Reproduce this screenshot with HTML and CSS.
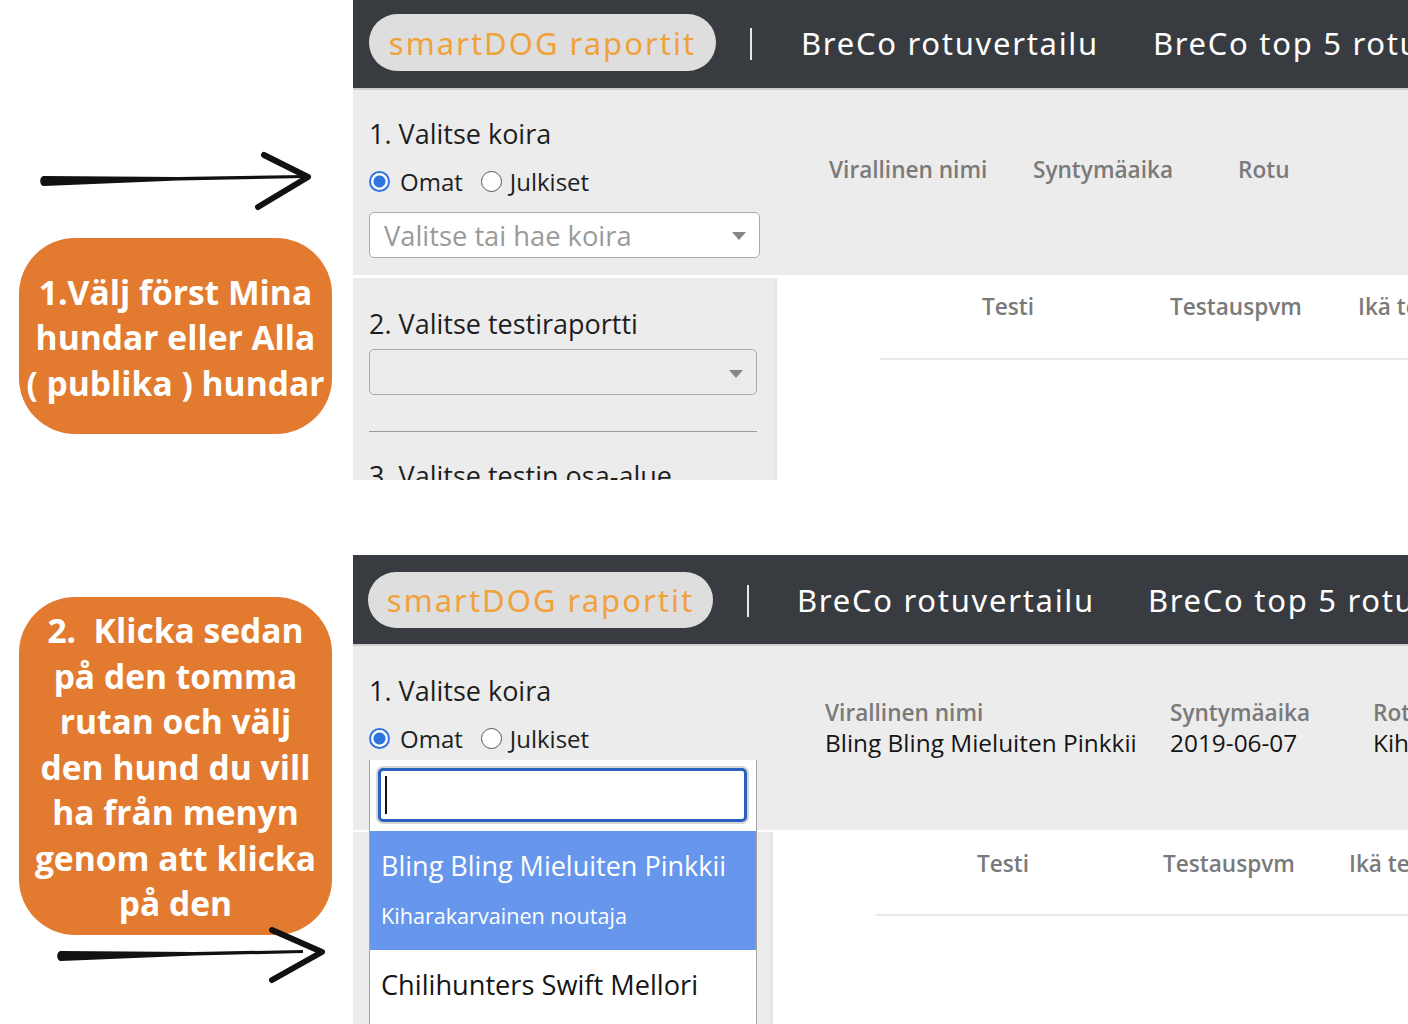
FILE: index.html
```html
<!DOCTYPE html>
<html lang="fi">
<head>
    <meta charset="UTF-8">
    <title>smartDOG raportit - ohje</title>
    <link rel="stylesheet" href="styles.css">
</head>
<body>
<div class="page">
    <aside class="notes">
        <svg class="arrow arrow-one" width="290" height="64" viewBox="0 0 290 64">
            <path d="M6 28 C1 28 1 38 6 38 L140 32.5 L266 30 L266 27 L140 29 Z"/>
            <polyline points="226,7 270,29 220,59"/>
        </svg>
        <div class="callout callout-one">1.Välj först Mina<br>hundar eller Alla<br>( publika ) hundar</div>
        <div class="callout callout-two">2.&nbsp; Klicka sedan<br>på den tomma<br>rutan och välj<br>den hund du vill<br>ha från menyn<br>genom att klicka<br>på den</div>
        <svg class="arrow arrow-two" width="275" height="62" viewBox="0 0 275 62">
            <path d="M6 26 C1 26 1 36 6 36 L140 30.5 L248 28 L248 25 L140 27 Z"/>
            <polyline points="217,5 267,27 217,55"/>
        </svg>
    </aside>

    <main class="shots">
        <!-- koiraa ei ole vielä valittu -->
        <section class="shot shot-first">
            <nav class="nav">
                <div class="brand">smartDOG raportit</div>
                <span class="divider"></span>
                <a class="nav-link">BreCo rotuvertailu</a>
                <a class="nav-link">BreCo top 5 rotuvertailu</a>
            </nav>
            <div class="pick">
                <div class="pick-form">
                    <h2 class="step">1. Valitse koira</h2>
                    <div class="radios">
                        <span class="radio on"></span><span class="radio-label">Omat</span>
                        <span class="radio"></span><span class="radio-label">Julkiset</span>
                    </div>
                    <div class="select">
                        <span class="placeholder">Valitse tai hae koira</span>
                        <span class="caret-down"></span>
                    </div>
                </div>
                <div class="dog-info">
                    <div class="info-col"><div class="info-label">Virallinen nimi</div></div>
                    <div class="info-col"><div class="info-label">Syntymäaika</div></div>
                    <div class="info-col"><div class="info-label">Rotu</div></div>
                </div>
            </div>
            <div class="lower">
                <div class="side">
                    <h2 class="step">2. Valitse testiraportti</h2>
                    <div class="select select-empty"><span class="caret-down"></span></div>
                    <hr class="side-rule">
                    <h2 class="step step-cut">3. Valitse testin osa-alue</h2>
                </div>
                <div class="results">
                    <div class="results-head">
                        <span class="col col-blank"></span>
                        <span class="col">Testi</span>
                        <span class="col">Testauspvm</span>
                        <span class="col">Ikä testissä</span>
                    </div>
                </div>
            </div>
        </section>

        <!-- valintalista auki -->
        <section class="shot shot-second">
            <nav class="nav">
                <div class="brand">smartDOG raportit</div>
                <span class="divider"></span>
                <a class="nav-link">BreCo rotuvertailu</a>
                <a class="nav-link">BreCo top 5 rotuvertailu</a>
            </nav>
            <div class="pick">
                <div class="pick-form">
                    <h2 class="step">1. Valitse koira</h2>
                    <div class="radios">
                        <span class="radio on"></span><span class="radio-label">Omat</span>
                        <span class="radio"></span><span class="radio-label">Julkiset</span>
                    </div>
                    <div class="dropdown">
                        <div class="search"><span class="text-caret"></span></div>
                        <ul class="options">
                            <li class="option active">
                                <div class="option-name">Bling Bling Mieluiten Pinkkii</div>
                                <div class="option-breed">Kiharakarvainen noutaja</div>
                            </li>
                            <li class="option">
                                <div class="option-name">Chilihunters Swift Mellori</div>
                            </li>
                        </ul>
                    </div>
                </div>
                <div class="dog-info">
                    <div class="info-col">
                        <div class="info-label">Virallinen nimi</div>
                        <div class="info-value">Bling Bling Mieluiten Pinkkii</div>
                    </div>
                    <div class="info-col">
                        <div class="info-label">Syntymäaika</div>
                        <div class="info-value">2019-06-07</div>
                    </div>
                    <div class="info-col">
                        <div class="info-label">Rotu</div>
                        <div class="info-value">Kiharakarvainen noutaja</div>
                    </div>
                </div>
            </div>
            <div class="lower">
                <div class="side"></div>
                <div class="results">
                    <div class="results-head">
                        <span class="col col-blank"></span>
                        <span class="col">Testi</span>
                        <span class="col">Testauspvm</span>
                        <span class="col">Ikä testissä</span>
                    </div>
                </div>
            </div>
        </section>
    </main>
</div>
</body>
</html>
```

FILE: styles.css
```css
*{
    margin: 0;
    padding: 0;
    list-style: none;
    box-sizing: border-box;
}
body{
    background: #fff;
    font-family: "Open Sans", "Noto Sans", sans-serif;
    width: 1408px;
    height: 1024px;
    overflow: hidden;
}
.page{
    display: grid;
    grid-template-columns: 353px 1fr;
    height: 1024px;
}

/* ohjeet vasemmalla */
.notes{
    display: flex;
    flex-direction: column;
    align-items: flex-start;
}
.arrow path{
    fill: #111;
}
.arrow polyline{
    fill: none;
    stroke: #111;
    stroke-width: 6;
    stroke-linecap: round;
    stroke-linejoin: round;
}
.arrow-one{
    margin: 148px 0 0 38px;
}
.arrow-two{
    margin: -10px 0 0 55px;
    position: relative;
}
.callout{
    width: 313px;
    margin-left: 19px;
    background: #e27b2f;
    border-radius: 56px;
    color: #fff;
    font-weight: 700;
    font-size: 33.6px;
    line-height: 45.5px;
    text-align: center;
    display: flex;
    align-items: center;
    justify-content: center;
    white-space: nowrap;
}
.callout-one{
    margin-top: 26px;
    height: 196px;
    padding-top: 4px;
}
.callout-two{
    margin-top: 163px;
    height: 338px;
    padding-top: 3px;
}

/* kuvakaappaukset */
.shots{
    display: flex;
    flex-direction: column;
    gap: 75px;
}
.shot{
    overflow: hidden;
    display: flex;
    flex-direction: column;
}
.shot-first{
    height: 480px;
}
.shot-second{
    height: 469px;
}

.nav{
    height: 90px;
    flex: none;
    background: #383b40;
    border-bottom: 2px solid #cdcdcd;
    display: flex;
    align-items: flex-start;
    padding-left: 16px;
    white-space: nowrap;
    font-family: "Noto Sans", sans-serif;
    font-size: 31px;
    letter-spacing: 2px;
}
.brand{
    margin-top: 14px;
    width: 347px;
    height: 57px;
    border-radius: 29px;
    background: #dedede;
    color: #efa23a;
    display: flex;
    align-items: center;
    justify-content: center;
    flex: none;
}
.divider{
    width: 2px;
    height: 32px;
    margin: 28px 49px 0 34px;
    background: #e6e6e6;
    flex: none;
}
.nav-link{
    color: #fff;
    line-height: 86px;
    margin-right: 54px;
    letter-spacing: 1.7px;
}
.shot-second .nav{
    height: 91px;
    padding-left: 15px;
}
.shot-second .brand{
    margin-top: 17px;
    width: 345px;
    height: 56px;
}
.shot-second .divider{
    margin: 30px 48px 0 34px;
}
.shot-second .nav-link{
    line-height: 90px;
    margin-right: 53px;
}

.step{
    font-weight: 400;
    font-size: 27px;
    line-height: 36px;
    color: #1e1e1e;
}
.pick{
    display: flex;
    background: #ececec;
    height: 185px;
    flex: none;
}
.shot-second .pick{
    height: 184px;
}
.pick-form{
    width: 424px;
    padding: 26px 0 0 16px;
    flex: none;
    position: relative;
}
.shot-second .pick-form{
    width: 420px;
    padding-top: 27px;
}
.radios{
    display: flex;
    align-items: center;
    height: 36px;
    margin-top: 11px;
    font-size: 24px;
    color: #1e1e1e;
}
.radio{
    width: 21px;
    height: 21px;
    border-radius: 50%;
    border: 1.5px solid #555;
    background: #fff;
    flex: none;
}
.radio.on{
    border: 2px solid #2f74e0;
    background: radial-gradient(circle, #2f74e0 0 5.5px, #fff 6.5px);
}
.radio-label{
    margin: 0 18px 0 10px;
}
.radio-label:last-child{
    margin-left: 8px;
}

.select{
    margin-top: 13px;
    width: 391px;
    height: 46px;
    border: 1px solid #aaa;
    border-radius: 5px;
    background: #fff;
    display: flex;
    align-items: center;
    padding-left: 14px;
    position: relative;
}
.placeholder{
    font-size: 27.3px;
    color: #9a9a9a;
}
.caret-down{
    position: absolute;
    right: 13px;
    top: 19px;
    border-left: 7px solid transparent;
    border-right: 7px solid transparent;
    border-top: 8px solid #858585;
}
.select-empty{
    background: #ececec;
    width: 388px;
    margin-top: 7px;
}
.select-empty .caret-down{
    top: 20px;
}

.dog-info{
    display: grid;
    grid-template-columns: 204px 205px auto;
    padding: 65px 0 0 52px;
    white-space: nowrap;
}
.shot-second .dog-info{
    grid-template-columns: 345px 203px auto;
    padding-top: 52px;
}
.info-label{
    font-size: 22.6px;
    font-weight: 600;
    color: #7a7a7a;
    line-height: 30px;
}
.info-value{
    font-size: 24.4px;
    color: #151515;
    line-height: 30px;
}

.lower{
    display: flex;
    flex: 1;
    margin-top: 3px;
}
.shot-second .lower{
    margin-top: 2px;
}
.side{
    width: 424px;
    flex: none;
    background: #ececec;
    padding: 28px 0 0 16px;
    box-shadow: inset -3px 0 3px rgba(0, 0, 0, 0.03);
}
.shot-second .side{
    width: 420px;
}
.side-rule{
    border: none;
    border-top: 1px solid #9a9a9a;
    width: 388px;
    margin: 36px 0 26px;
}
.results{
    flex: 1;
    overflow: hidden;
    padding: 0 0 0 103px;
}
.results-head{
    display: flex;
    height: 82px;
    border-bottom: 2px solid #e9e9e9;
    padding-top: 14px;
    white-space: nowrap;
    font-size: 22.6px;
    font-weight: 600;
    color: #7a7a7a;
    line-height: 30px;
}
.col{
    width: 188px;
    flex: none;
}
.col-blank{
    width: 102px;
}
.shot-second .results-head{
    height: 84px;
    padding-top: 17px;
}
.shot-second .col{
    width: 186px;
}
.shot-second .col-blank{
    width: 101px;
}

/* avattu koiravalikko */
.dropdown{
    position: absolute;
    left: 16px;
    top: 114px;
    width: 388px;
    height: 300px;
    background: #fff;
    border-left: 1px solid #a5a5a5;
    border-right: 1px solid #a5a5a5;
    padding-top: 8px;
    z-index: 2;
}
.search{
    margin-left: 8px;
    width: 369px;
    height: 54px;
    border: 3px solid #2d5fbf;
    border-radius: 5px;
    box-shadow: 0 0 0 2px #d6d6d6;
    padding: 5px 0 0 4px;
}
.text-caret{
    display: block;
    width: 2px;
    height: 38px;
    background: #111;
}
.options{
    margin-top: 9px;
}
.option{
    padding: 17px 11px 17px;
}
.option.active{
    background: #6797ec;
    color: #fff;
    height: 119px;
    padding-top: 16px;
}
.option-name{
    font-size: 27.2px;
    line-height: 36px;
    color: #151515;
    white-space: nowrap;
}
.option.active .option-name{
    font-size: 27px;
    line-height: 38px;
    color: #fff;
}
.option-breed{
    margin-top: 17px;
    font-size: 21.6px;
    line-height: 28px;
}
```
